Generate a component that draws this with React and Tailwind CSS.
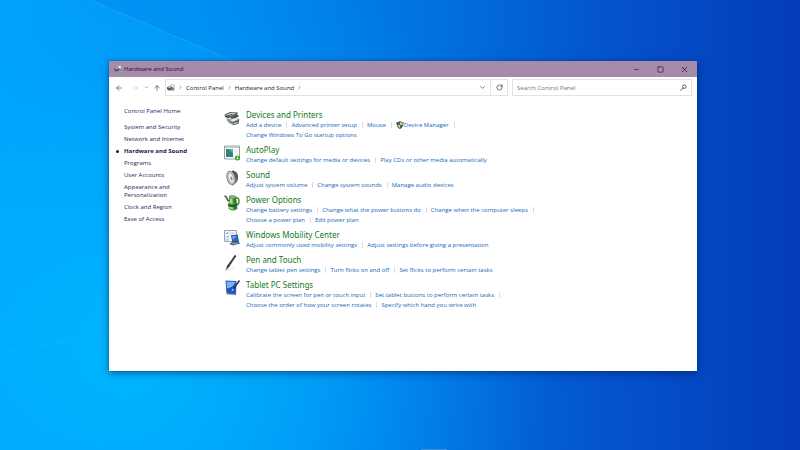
import React, { useState } from "react";
import { ArrowLeft, ArrowRight, ArrowUp, ChevronDown, ChevronRight, Minus, RotateCw, Square, X } from "lucide-react";

const sidebarLinks = [
  "System and Security",
  "Network and Internet",
  "Hardware and Sound",
  "Programs",
  "User Accounts",
  "Appearance and Personalization",
  "Clock and Region",
  "Ease of Access",
];

const categories = [
  {
    title: "Devices and Printers",
    icon: PrinterIcon,
    links: ["Add a device", "Advanced printer setup", "Mouse", "Device Manager", "Change Windows To Go startup options"],
  },
  {
    title: "AutoPlay",
    icon: AutoPlayIcon,
    links: ["Change default settings for media or devices", "Play CDs or other media automatically"],
  },
  {
    title: "Sound",
    icon: SpeakerIcon,
    links: ["Adjust system volume", "Change system sounds", "Manage audio devices"],
  },
  {
    title: "Power Options",
    icon: PowerIcon,
    links: [
      "Change battery settings",
      "Change what the power buttons do",
      "Change when the computer sleeps",
      "Choose a power plan",
      "Edit power plan",
    ],
  },
  {
    title: "Windows Mobility Center",
    icon: MobilityIcon,
    links: ["Adjust commonly used mobility settings", "Adjust settings before giving a presentation"],
  },
  {
    title: "Pen and Touch",
    icon: PenIcon,
    links: ["Change tablet pen settings", "Turn flicks on and off", "Set flicks to perform certain tasks"],
  },
  {
    title: "Tablet PC Settings",
    icon: TabletIcon,
    links: [
      "Calibrate the screen for pen or touch input",
      "Set tablet buttons to perform certain tasks",
      "Choose the order of how your screen rotates",
      "Specify which hand you write with",
    ],
  },
];

function PrinterIcon() {
  return (
    <svg viewBox="0 0 32 32" className="size-4">
      <path d="M1 9 12 4l16 1-3 6-13 4z" fill="#5c6163" />
      <path d="m5 9 9-3 10 1-9 4z" fill="#dfe2e2" />
      <path d="m9 9 6-1 5 1-6 1z" fill="#45494c" />
      <path d="m1 10 10 4v3L2 14z" fill="#3d4042" />
      <path d="m12 15 15-6 3 4-14 5z" fill="#484c4e" />
      <path d="m5 16 5 2v7l-4-3z" fill="#989d9e" />
      <path d="m9 19 9-3 13 2-2 9-10 3-9-4z" fill="#83888a" />
      <path d="m11 20 10-3 7 2-10 4z" fill="#f1f3f3" />
      <path d="m18 24 12-4-1 7-10 3z" fill="#5b6062" />
      <path d="m20 26 7-2v2l-7 2z" fill="#dfe3e3" />
    </svg>
  );
}

function AutoPlayIcon() {
  return (
    <svg viewBox="0 0 32 32" className="size-4">
      <path d="M1 2h30v26H1z" fill="#f7f9fa" stroke="#93a0a7" strokeWidth="2" />
      <path d="M2 3h28v3H2z" fill="#bccad1" />
      <path d="M4 8h14v16H4z" fill="#2f8372" />
      <path d="M9 8h9v9z" fill="#64ab93" />
      <path d="M21 10h6M21 14h6" stroke="#d7dee1" strokeWidth="1" />
      <circle cx="27" cy="26" r="5" fill="#3f9f30" />
      <path d="M26 23v3h-2l3 3 3-3h-2v-3z" fill="#d2f0b7" />
    </svg>
  );
}

function SpeakerIcon() {
  return (
    <svg viewBox="0 0 32 32" className="size-4">
      <path d="M16 1c8 0 13 6 12 14 0 8-5 13-12 16z" fill="#4d5153" />
      <path d="M20 3c5 3 6 8 6 13s-2 9-6 12" fill="none" stroke="#85898b" strokeWidth="1" />
      <ellipse cx="14" cy="16" rx="8" ry="14" transform="rotate(-14 14 16)" fill="#c2c6c8" stroke="#85898b" strokeWidth="2" />
      <ellipse cx="14" cy="16" rx="5" ry="10" transform="rotate(-14 14 16)" fill="#eceeef" stroke="#9a9fa1" />
      <ellipse cx="15" cy="17" rx="2" ry="4" transform="rotate(-14 15 17)" fill="#8d9295" />
    </svg>
  );
}

function PowerIcon() {
  return (
    <svg viewBox="0 0 32 32" className="size-4">
      <path d="M23 6c9-3 9 12 2 14" fill="none" stroke="#4d8a34" strokeWidth="3" />
      <path d="M1 2c6 0 3 8 9 10" fill="none" stroke="#434a41" strokeWidth="3" />
      <path d="M10 4h14l3 23c-4 5-14 5-18 0z" fill="#36a32e" />
      <path d="M12 6h5v11l-6-1z" fill="#a2e77b" />
      <path d="m20 7 4 1 1 20-4 1z" fill="#1f7628" />
      <path d="M8 17c6 3 13 2 18-2v5c-5 4-12 5-18 2z" fill="#33443a" />
      <path d="M8 17c6 3 13 2 18-2" fill="none" stroke="#b4cbb4" strokeWidth="1" />
      <ellipse cx="17" cy="4" rx="7" ry="3" fill="#9db38f" stroke="#3c5934" />
      <path d="m10 23 8 2v4l-7-2z" fill="#9be56b" />
    </svg>
  );
}

function MobilityIcon() {
  return (
    <svg viewBox="0 0 32 32" className="size-4">
      <path d="M1 1h24v22H1z" fill="#f5f8fc" stroke="#96a5bb" strokeWidth="2" />
      <path d="m4 6 2 2 3-4m-5 9 2 2 3-4m-5 8 2 2 3-4" fill="none" stroke="#4577bc" strokeWidth="1.5" />
      <path d="M12 6h9M12 10h5" stroke="#acb9ca" strokeWidth="1.5" />
      <path d="m14 11 13-2 3 15-13 2z" fill="#304476" />
      <path d="m16 13 10-2 2 11-10 2z" fill="#2568ce" />
      <path d="m16 13 10-2-8 9z" fill="#72a8ec" />
      <path d="m14 25 15-2 3 4-14 4-7-3z" fill="#4a5878" />
      <path d="m15 27 12-2 2 1-11 3z" fill="#a5afc0" />
    </svg>
  );
}

function PenIcon() {
  return (
    <svg viewBox="0 0 32 32" className="size-4">
      <path d="m5 31 16-5" stroke="#dfdfdf" strokeWidth="2" />
      <path d="M21 1c2-1 4 0 3 2L10 24l-7 7 3-9z" fill="#292b2e" />
      <path d="M21 4 10 21" stroke="#777c82" strokeWidth="1" />
      <path d="m6 24 2 2-5 5z" fill="#8a8a8a" />
    </svg>
  );
}

function TabletIcon() {
  return (
    <svg viewBox="0 0 32 32" className="size-4">
      <path d="m3 1 22 1-1 28-19-2z" fill="#3c5ba7" />
      <path d="m5 3 18 1-1 22-16-2z" fill="#1a53cf" />
      <path d="m5 3 18 1C20 11 14 16 6 17z" fill="#7cb0f0" />
      <path d="m5 27 19 2v2L6 29z" fill="#a8b1c3" />
      <path d="M31 1 18 19" stroke="#243050" strokeWidth="3" />
      <path d="m17 17 3 2-5 4z" fill="#d4dff2" />
    </svg>
  );
}

function ShieldIcon() {
  return (
    <svg viewBox="0 0 16 16" className="size-2">
      <path d="M8 0c2 2 5 2 7 2 0 7-1 11-7 14C2 13 1 9 1 2c3 0 5 0 7-2z" fill="#444d58" />
      <path d="M8 2v6H3L2 3c2 0 4 0 6-1zM8 8h5c-1 3-2 5-5 6z" fill="#2967ad" />
      <path d="M8 2c2 1 4 1 6 1l-1 5H8zM3 8h5v6C5 13 4 11 3 8z" fill="#f2ce38" />
    </svg>
  );
}

function HardwareIcon() {
  return (
    <svg viewBox="0 0 20 18" className="size-2 shrink-0">
      <path d="M9 1h9v14h-6z" fill="#eef1f2" stroke="#737b80" />
      <path d="m0 7 7-3 6 3v6l-7 3-6-4z" fill="#555d61" />
      <path d="m2 7 5-2 4 2-5 2z" fill="#d5dadd" />
      <circle cx="14" cy="11" r="3" fill="#899197" stroke="#454c50" />
    </svg>
  );
}

function Wallpaper() {
  return (
    <svg viewBox="0 0 800 450" preserveAspectRatio="none" className="absolute inset-0 h-full w-full" aria-hidden="true">
      <defs>
        <linearGradient id="base" x1="0" y1="0" x2="1" y2="0">
          <stop offset="0" stopColor="#00a4fa" />
          <stop offset="0.25" stopColor="#0095f4" />
          <stop offset="0.5" stopColor="#0077e5" />
          <stop offset="0.75" stopColor="#0454ce" />
          <stop offset="1" stopColor="#033db7" />
        </linearGradient>
        <radialGradient id="glow" gradientUnits="userSpaceOnUse" cx="130" cy="350" r="420">
          <stop offset="0" stopColor="#00baff" stopOpacity="0.9" />
          <stop offset="0.5" stopColor="#00b0ff" stopOpacity="0.5" />
          <stop offset="1" stopColor="#0090ff" stopOpacity="0" />
        </radialGradient>
        <linearGradient id="shade" x1="0" y1="0" x2="1" y2="0">
          <stop offset="0" stopColor="#0068d8" stopOpacity="0.16" />
          <stop offset="1" stopColor="#0068d8" stopOpacity="0" />
        </linearGradient>
      </defs>
      <path d="M0 0h800v450H0z" fill="url(#base)" />
      <path d="M0 0h800v450H0z" fill="url(#glow)" />
      <path d="M90 0 310 94H640V0z" fill="url(#shade)" />
      <path d="m90 0 220 94" stroke="#4fc3ff" opacity="0.3" />
      <path d="m0 353 109-18" stroke="#4fd0ff" opacity="0.15" />
      <path d="M421 449h26v1h-26z" fill="#5a94cc" opacity="0.7" />
    </svg>
  );
}

function Category({ category }) {
  const Icon = category.icon;
  return (
    <section className="flex gap-[6px]">
      <Icon />
      <div className="max-w-[310px]">
        <h2 className="font-['Noto_Sans',sans-serif] text-[8px] leading-[10px] text-[#157a1c]">
          <a href="#">{category.title}</a>
        </h2>
        <ul className="flex flex-wrap text-[6px] leading-[10px] text-[#1668bb]">
          {category.links.map((link, i) => (
            <li key={link} className="flex items-center">
              <a href="#" className="flex items-center whitespace-nowrap hover:underline">
                {link === "Device Manager" && <ShieldIcon />}
                {link}
              </a>
              {i < category.links.length - 1 && <span className="mr-1 ml-[5px] h-[6px] w-px bg-[#dcdcdc]" />}
            </li>
          ))}
        </ul>
      </div>
    </section>
  );
}

export default function App() {
  const [search, setSearch] = useState("");

  return (
    <div className="relative flex min-h-screen flex-col bg-[#0086ee] pt-[61px] pr-[103px] pb-[79px] pl-[109px] font-['Open_Sans',sans-serif]">
      <Wallpaper />

      <main className="relative flex flex-1 flex-col bg-white shadow-[0_0_1px_#2b3560,0_2px_8px_rgba(0,20,70,0.5)]">
        <header className="flex h-4 items-center bg-[#a78bab] pr-px pl-[5px] text-[#1c1320]">
          <HardwareIcon />
          <h1 className="ml-[2px] flex-1 text-[6px] leading-[10px]">Hardware and Sound</h1>
          <button aria-label="Minimize" className="flex w-6 justify-center"><Minus size={7} /></button>
          <button aria-label="Maximize" className="flex w-6 justify-center"><Square size={7} /></button>
          <button aria-label="Close" className="flex w-6 justify-center"><X size={9} /></button>
        </header>

        <div className="flex items-center gap-1 pt-[2px] pr-[5px] pl-[6px] text-[6px] leading-[10px] text-[#222]">
          <nav className="flex items-center gap-1 text-[#444]" aria-label="History">
            <button aria-label="Back"><ArrowLeft size={8} /></button>
            <button aria-label="Forward" className="ml-1 text-[#ccc]"><ArrowRight size={8} /></button>
            <button aria-label="Recent locations" className="ml-px"><ChevronDown size={5} /></button>
            <button aria-label="Up"><ArrowUp size={8} /></button>
          </nav>
          <div className="flex h-[17px] flex-1 items-center border border-[#e2e2e2]">
            <div className="flex flex-1 items-center gap-[3px] pl-px">
              <HardwareIcon />
              <ChevronRight size={5} />
              <a href="#">Control Panel</a>
              <ChevronRight size={5} />
              <a href="#">Hardware and Sound</a>
              <ChevronRight size={5} />
            </div>
            <button aria-label="Previous locations" className="flex w-4 justify-center"><ChevronDown size={7} /></button>
            <button aria-label="Refresh" className="flex h-full w-[17px] items-center justify-center border-l border-[#e2e2e2]">
              <RotateCw size={7} />
            </button>
          </div>
          <label className="flex h-[17px] w-[180px] items-center border border-[#e2e2e2] px-1">
            <input
              type="text"
              aria-label="Search Control Panel"
              placeholder="Search Control Panel"
              value={search}
              onChange={(e) => setSearch(e.target.value)}
              className="min-w-0 flex-1 outline-none placeholder:text-[#737373]"
            />
            <svg viewBox="0 0 16 16" className="size-[7px]" fill="none" stroke="#444" strokeWidth="2">
              <circle cx="10" cy="6" r="4" />
              <path d="m7 9-6 6" />
            </svg>
          </label>
        </div>

        <div className="flex flex-1 pt-[10px]">
          <aside className="w-[115px] pt-px pl-[15px] text-[6px] leading-[8px] text-[#26285c]">
            <a href="#">Control Panel Home</a>
            <ul className="mt-2 flex w-[64px] flex-col gap-1">
              {sidebarLinks.map((link) => (
                <li key={link} className="relative">
                  {link === "Hardware and Sound" ? (
                    <>
                      <span className="absolute top-[3px] left-[-8px] size-[3px] rounded-full bg-[#17174a]" />
                      <a href="#" aria-current="page" className="font-bold whitespace-nowrap text-[#17174a]">{link}</a>
                    </>
                  ) : (
                    <a href="#">{link}</a>
                  )}
                </li>
              ))}
            </ul>
          </aside>
          <div className="flex flex-1 flex-col gap-[5px] pt-1">
            {categories.map((category) => (
              <Category key={category.title} category={category} />
            ))}
          </div>
        </div>
      </main>
    </div>
  );
}
